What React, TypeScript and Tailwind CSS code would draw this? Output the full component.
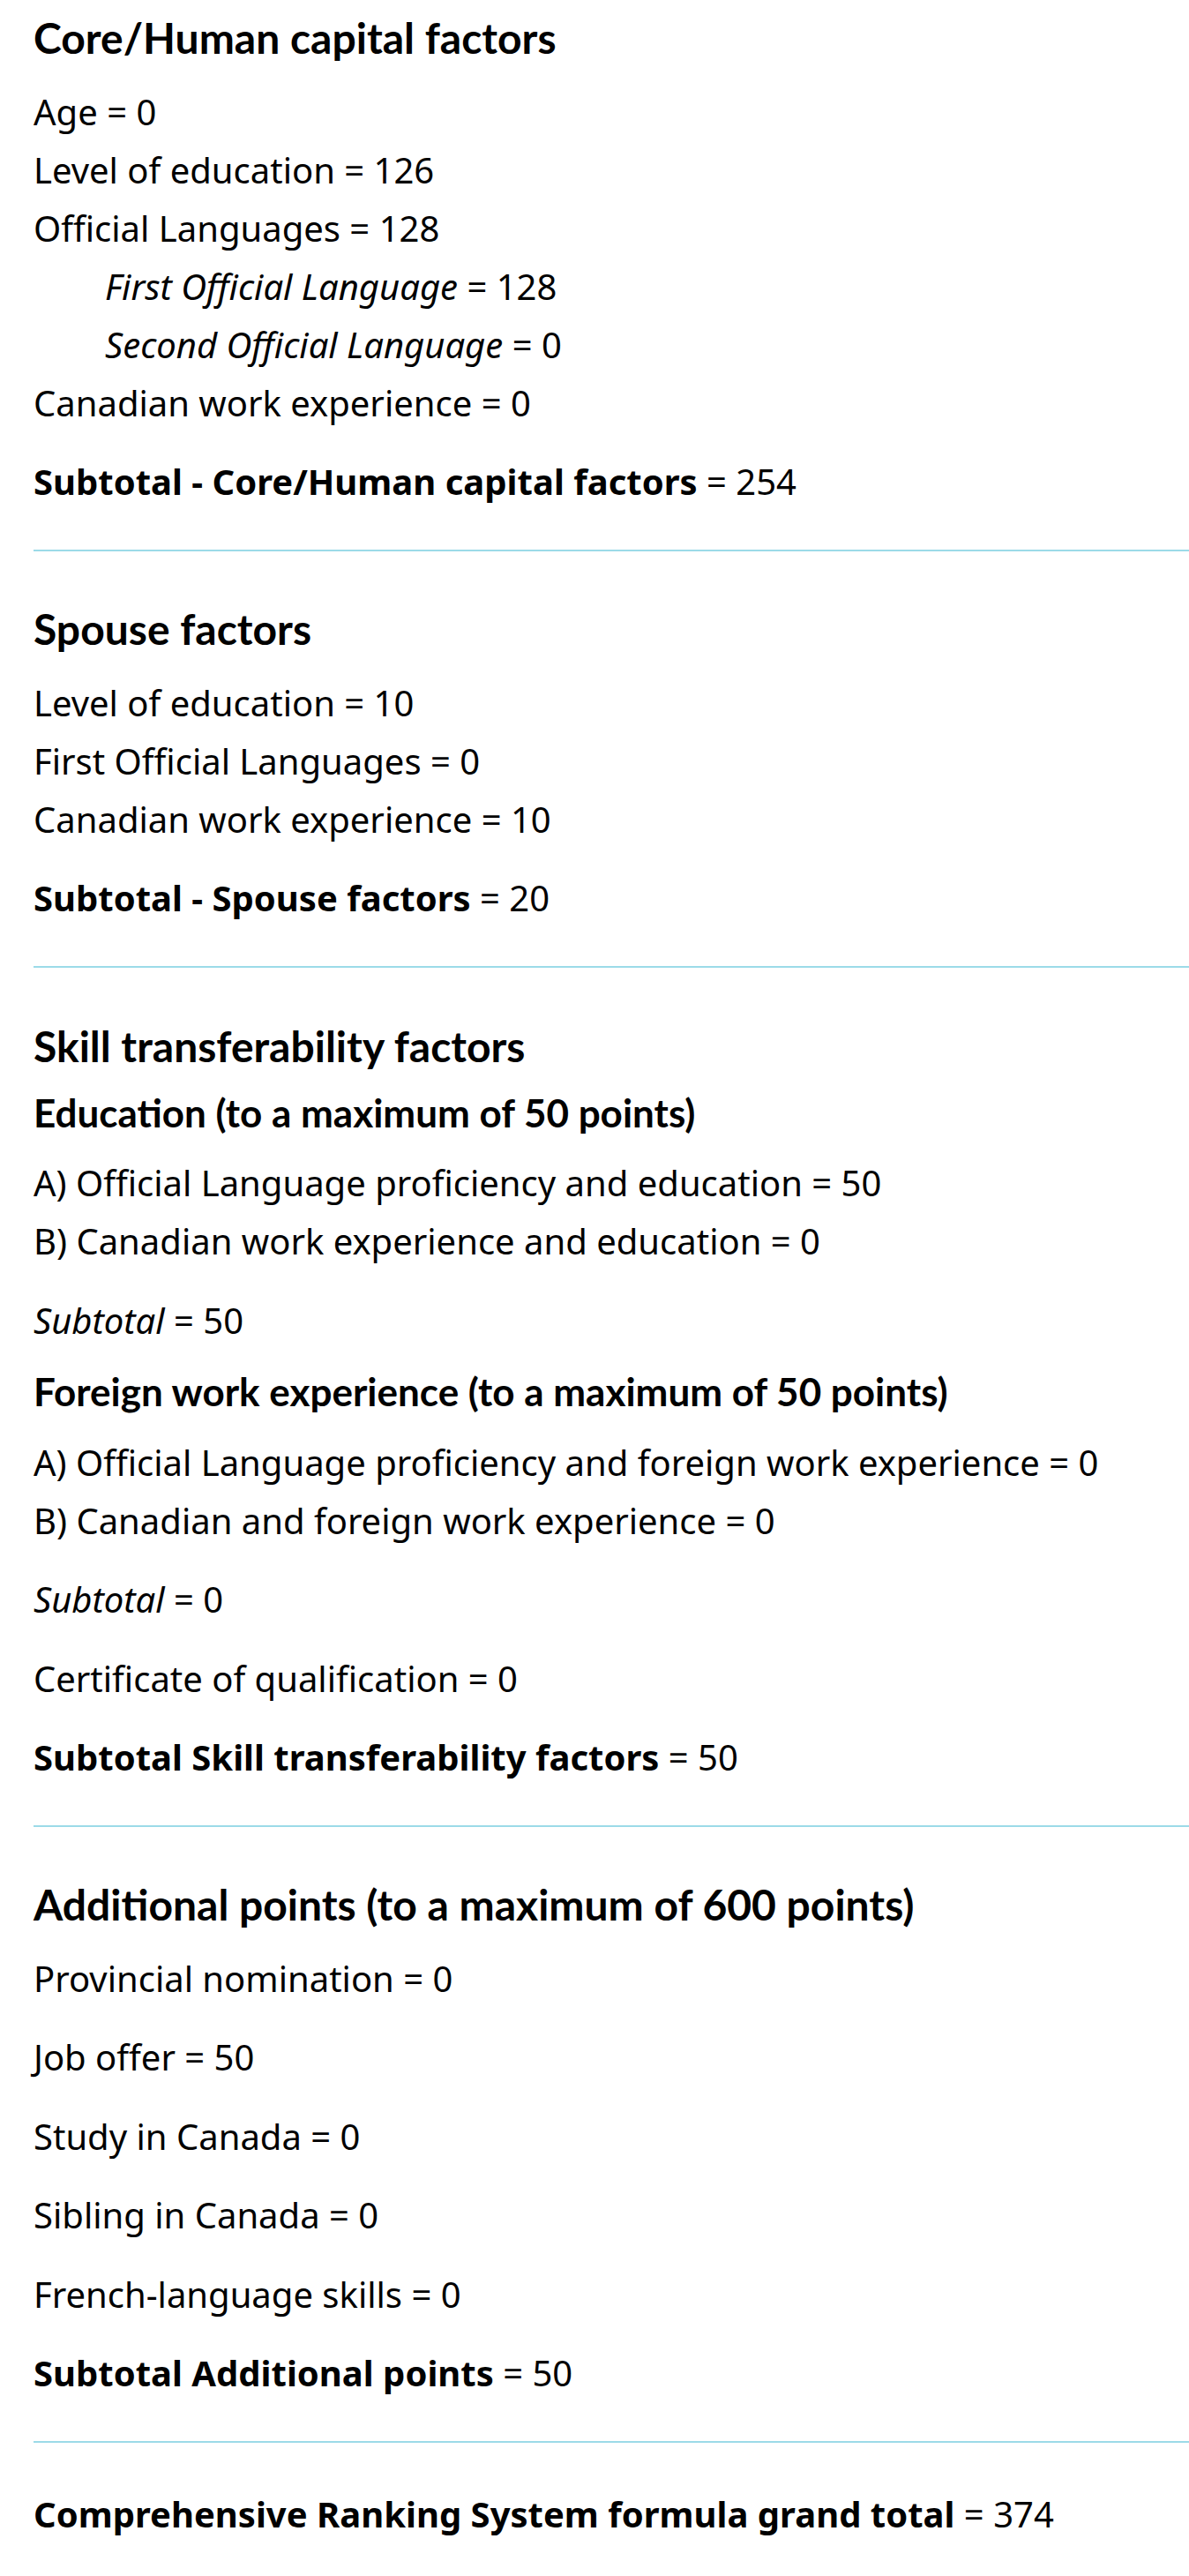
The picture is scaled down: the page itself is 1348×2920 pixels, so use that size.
import type { ReactNode } from 'react';

/* ------------------------------------------------------------------ */
/*  Data                                                               */
/* ------------------------------------------------------------------ */

const coreRows = [
  { label: 'Age', value: 0 },
  { label: 'Level of education', value: 126 },
  { label: 'Official Languages', value: 128 },
  { label: 'First Official Language', value: 128, sub: true },
  { label: 'Second Official Language', value: 0, sub: true },
  { label: 'Canadian work experience', value: 0 },
];

const spouseRows = [
  { label: 'Level of education', value: 10 },
  { label: 'First Official Languages', value: 0 },
  { label: 'Canadian work experience', value: 10 },
];

const additionalRows = [
  { label: 'Provincial nomination', value: 0 },
  { label: 'Job offer', value: 50 },
  { label: 'Study in Canada', value: 0 },
  { label: 'Sibling in Canada', value: 0 },
  { label: 'French-language skills', value: 0 },
];

/* ------------------------------------------------------------------ */
/*  Pieces                                                             */
/* ------------------------------------------------------------------ */

function Heading({ children, className = '' }: { children: ReactNode; className?: string }) {
  return (
    <h2 className={`font-['Lato',sans-serif] text-[48px] font-bold leading-[54px] ${className}`}>
      {children}
    </h2>
  );
}

function SubHeading({ children, className = '' }: { children: ReactNode; className?: string }) {
  return (
    <h3 className={`font-['Lato',sans-serif] text-[44px] font-bold leading-[48px] ${className}`}>
      {children}
    </h3>
  );
}

function Line({ children, className = '' }: { children: ReactNode; className?: string }) {
  return <p className={`text-[40px] leading-[66px] ${className}`}>{children}</p>;
}

function Divider() {
  return <div className="mt-[44px] h-[2px] w-full bg-[#9cdbe8]" />;
}

/* ------------------------------------------------------------------ */
/*  Component                                                          */
/* ------------------------------------------------------------------ */

export default function App() {
  return (
    <main className="min-h-[2920px] bg-white pl-[38px] pt-[16px] font-['Noto_Sans',sans-serif] text-black">
      {/* Core / human capital */}
      <section>
        <Heading>Core/Human capital factors</Heading>
        <div className="mt-[23.5px]">
          {coreRows.map((r) => (
            <Line key={r.label} className={r.sub ? 'pl-[81px]' : ''}>
              {r.sub ? <em>{r.label}</em> : r.label} = {r.value}
            </Line>
          ))}
        </div>
        <Line className="mt-[23.5px]">
          <strong>Subtotal - Core/Human capital factors</strong> = 254
        </Line>
      </section>

      <Divider />

      {/* Spouse */}
      <section className="pt-[61px]">
        <Heading>Spouse factors</Heading>
        <div className="mt-[23.5px]">
          {spouseRows.map((r) => (
            <Line key={r.label}>
              {r.label} = {r.value}
            </Line>
          ))}
        </div>
        <Line className="mt-[23.5px]">
          <strong>Subtotal - Spouse factors</strong> = 20
        </Line>
      </section>

      <Divider />

      {/* Skill transferability */}
      <section className="pt-[62px]">
        <Heading>Skill transferability factors</Heading>
        <SubHeading className="mt-[23.5px]">Education (to a maximum of 50 points)</SubHeading>
        <div className="mt-[23.5px]">
          <Line>A) Official Language proficiency and education = 50</Line>
          <Line>B) Canadian work experience and education = 0</Line>
        </div>
        <Line className="mt-[23.5px]">
          <em>Subtotal</em> = 50
        </Line>
        <SubHeading className="mt-[23.5px]">Foreign work experience (to a maximum of 50 points)</SubHeading>
        <div className="mt-[23.5px]">
          <Line>A) Official Language proficiency and foreign work experience = 0</Line>
          <Line>B) Canadian and foreign work experience = 0</Line>
        </div>
        <Line className="mt-[23.5px]">
          <em>Subtotal</em> = 0
        </Line>
        <Line className="mt-[23.5px]">Certificate of qualification = 0</Line>
        <Line className="mt-[23.5px]">
          <strong>Subtotal Skill transferability factors</strong> = 50
        </Line>
      </section>

      <Divider />

      {/* Additional points */}
      <section className="pt-[61px]">
        <Heading>Additional points (to a maximum of 600 points)</Heading>
        {additionalRows.map((r) => (
          <Line key={r.label} className="mt-[23.5px]">
            {r.label} = {r.value}
          </Line>
        ))}
        <Line className="mt-[23.5px]">
          <strong>Subtotal Additional points</strong> = 50
        </Line>
      </section>

      <Divider />

      {/* Grand total */}
      <Line className="mt-[47.5px]">
        <strong>Comprehensive Ranking System formula grand total</strong> = 374
      </Line>
    </main>
  );
}
